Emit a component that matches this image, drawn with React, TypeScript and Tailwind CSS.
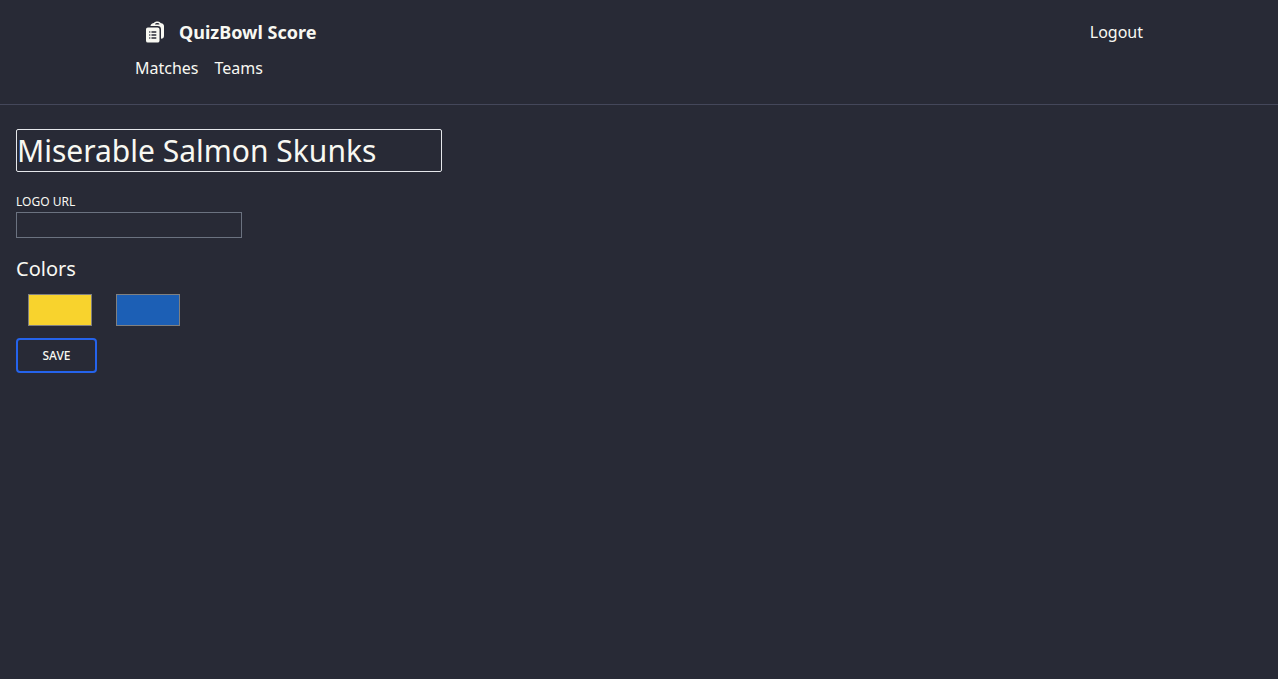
import { useState } from "react";
import { HiClipboardDocumentList } from "react-icons/hi2";

export default function App() {
  const [name, setName] = useState("Miserable Salmon Skunks");
  return (
    <div className="min-h-screen bg-[#282a36] font-['Noto_Sans',sans-serif] text-[#f8f8f2]">
      <header className="border-b border-[#44475a] pt-4 pb-6">
        <div className="mx-auto max-w-5xl px-2">
          <div className="flex h-8 items-center justify-between">
            <a href="#" className="flex items-center gap-3 pl-2 text-lg font-bold">
              <HiClipboardDocumentList className="size-6" />
              QuizBowl Score
            </a>
            <a href="#">Logout</a>
          </div>
          <nav className="mt-2 flex gap-4 leading-6">
            <a href="#">Matches</a>
            <a href="#">Teams</a>
          </nav>
        </div>
      </header>
      <main className="px-4 py-6">
        <form onSubmit={(e) => e.preventDefault()}>
          <input
            aria-label="Team name"
            value={name}
            onChange={(e) => setName(e.target.value)}
            className="block h-[43px] w-[426px] max-w-full rounded-xs border border-[#e5e7eb] bg-transparent text-3xl"
          />
          <label htmlFor="logo" className="mt-5 block text-xs leading-5 uppercase">Logo URL</label>
          <input id="logo" className="block h-[26px] w-[226px] border border-[#6b7280] bg-transparent" />
          <h2 className="mt-[18px] text-xl leading-[26px]">Colors</h2>
          <div className="flex gap-6 p-3">
            <button type="button" aria-label="Primary color" className="h-8 w-16 border border-[#808080] bg-[#f8d32d]" />
            <button type="button" aria-label="Secondary color" className="h-8 w-16 border border-[#808080] bg-[#1c5fb5]" />
          </div>
          <button type="submit" className="block min-w-[81px] rounded-sm border-2 border-[#2563eb] px-6 py-2 text-xs leading-[15px] font-medium uppercase">Save</button>
        </form>
      </main>
    </div>
  );
}
